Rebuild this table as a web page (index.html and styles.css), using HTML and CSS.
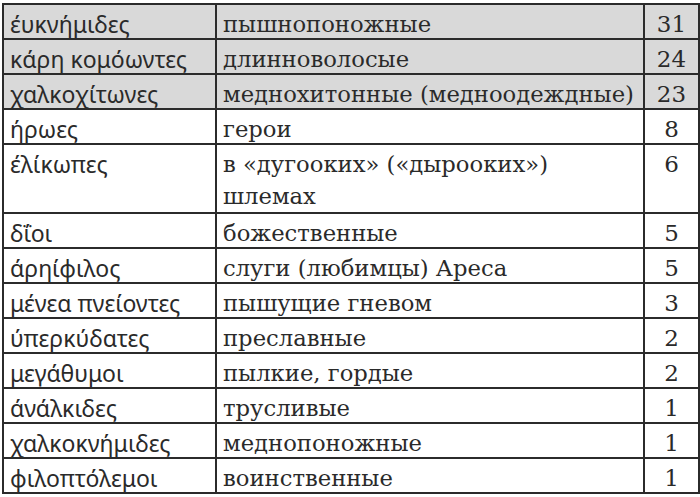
FILE: index.html
```html
<!DOCTYPE html>
<html lang="ru">
<head>
<meta charset="utf-8">
<link rel="stylesheet" href="styles.css">
</head>
<body>
<table class="epithets">
  <colgroup>
    <col class="c-greek">
    <col class="c-rus">
    <col class="c-num">
  </colgroup>
  <tbody>
    <tr class="hl"><td class="greek">έυκνήμιδες</td><td class="rus">пышнопоножные</td><td class="num">31</td></tr>
    <tr class="hl"><td class="greek">κάρη κομόωντες</td><td class="rus">длинноволосые</td><td class="num">24</td></tr>
    <tr class="hl"><td class="greek">χαλκοχίτωνες</td><td class="rus">меднохитонные (медноодеждные)</td><td class="num">23</td></tr>
    <tr><td class="greek">ήρωες</td><td class="rus">герои</td><td class="num">8</td></tr>
    <tr class="tall"><td class="greek">έλίκωπες</td><td class="rus">в «дугооких» («дырооких»)<br>шлемах</td><td class="num">6</td></tr>
    <tr><td class="greek">δΐοι</td><td class="rus">божественные</td><td class="num">5</td></tr>
    <tr><td class="greek">άρηίφιλος</td><td class="rus">слуги (любимцы) Ареса</td><td class="num">5</td></tr>
    <tr><td class="greek">μένεα πνείοντες</td><td class="rus">пышущие гневом</td><td class="num">3</td></tr>
    <tr><td class="greek">ύπερκύδατες</td><td class="rus">преславные</td><td class="num">2</td></tr>
    <tr><td class="greek">μεγάθυμοι</td><td class="rus">пылкие, гордые</td><td class="num">2</td></tr>
    <tr><td class="greek">άνάλκιδες</td><td class="rus">трусливые</td><td class="num">1</td></tr>
    <tr><td class="greek">χαλκοκνήμιδες</td><td class="rus">меднопоножные</td><td class="num">1</td></tr>
    <tr><td class="greek">φιλοπτόλεμοι</td><td class="rus">воинственные</td><td class="num">1</td></tr>
  </tbody>
</table>
</body>
</html>
```

FILE: styles.css
```css
html, body {
  margin: 0;
  padding: 0;
  background: #ffffff;
}

body {
  padding: 3px 0 0 2px;
}

.epithets {
  border-collapse: collapse;
  table-layout: fixed;
  width: 696px;
  color: #2a2a2a;
}

.c-greek { width: 213px; }
.c-rus { width: 428px; }
.c-num { width: 55px; }

.epithets td {
  border: 2px solid #2b2b2b;
  padding: 5px 6px 0 6px;
  vertical-align: top;
  line-height: 28px;
  white-space: nowrap;
  overflow: hidden;
}

.epithets tr.hl td {
  background: #d9d9d9;
}

.greek {
  font-family: "Noto Sans", "DejaVu Sans", sans-serif;
  font-size: 23px;
}

.rus {
  font-family: "DejaVu Serif", serif;
  font-size: 22.7px;
}

.num {
  font-family: "DejaVu Serif", serif;
  font-size: 23px;
  text-align: center;
}

.epithets tr.tall td {
  padding-top: 3px;
  line-height: 32px;
}
```
